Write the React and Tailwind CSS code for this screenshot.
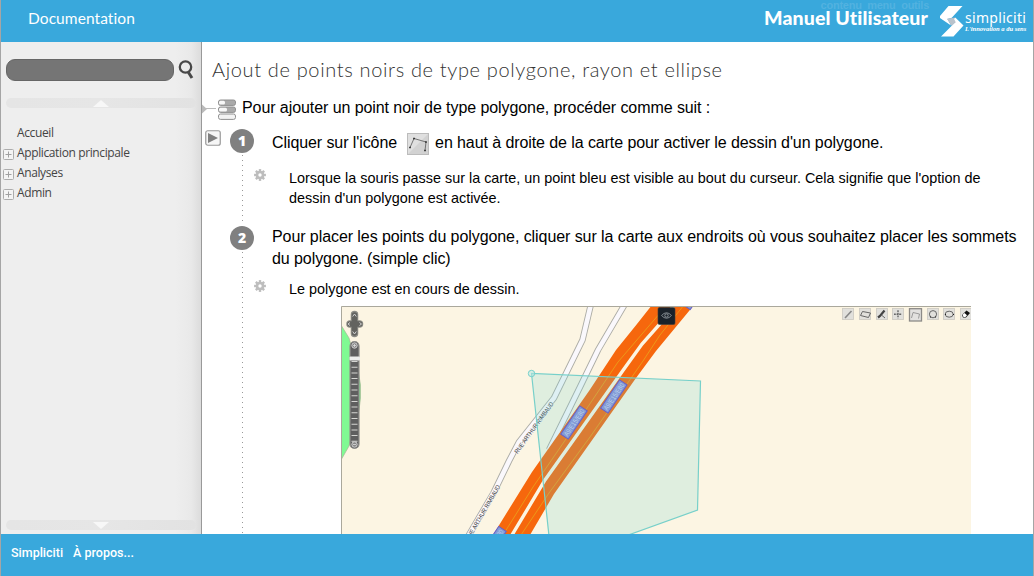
import React from "react";

const menu = [
  { label: "Accueil", expandable: false },
  { label: "Application principale", expandable: true },
  { label: "Analyses", expandable: true },
  { label: "Admin", expandable: true },
];

function Logo() {
  return (
    <svg width="24" height="31" viewBox="940 6 24 31" className="mt-1.5 shrink-0">
      <path d="M948.500 6H962.500L951.800 17.800L947.500 19L951 25.500L940 18V16Z" fill="#fff" />
      <path d="M947 18.800L955.500 17.500L958 22L951.500 25.800Z" fill="#b3bfca" />
      <path d="M951 21L955.500 17.800L963.500 25.500L953.500 36.500H941L952 25.500L956 22Z" fill="#fff" />
      <path d="M947.500 19.200L953.500 18L955.500 21.500L951.500 25Z" fill="#b9c3cc" />
    </svg>
  );
}

function Header() {
  return (
    <header className="relative flex h-[42px] shrink-0 items-start bg-[#39a8dc] text-white">
      <div className="pl-[27px] pt-[7px] font-['Lato'] text-[15.5px] font-normal leading-[22px] tracking-[0.080px]">Documentation</div>
      <div className="absolute right-[104px] top-[-2px] whitespace-pre font-['Liberation_Sans'] text-[11px] font-bold leading-[14px] tracking-[-0.250px] text-[#52b2e0]">contenu  menu  outils</div>
      <div className="relative ml-auto w-[166px] whitespace-nowrap pt-[6px] font-['Lato'] text-[19.500px] font-black leading-6 tracking-[0.120px]">Manuel Utilisateur</div>
      <div className="ml-[10px] flex w-[93px]">
        <Logo />
        <div className="ml-px pt-[9px] font-['Noto_Sans'] leading-none">
          <div className="text-[14px] leading-[18px] tracking-[0.3px]">simpliciti</div>
          <div className="-mt-px whitespace-nowrap font-['Liberation_Serif'] text-[6.500px] font-bold italic leading-[6px]">L'innovation a du sens</div>
        </div>
      </div>
    </header>
  );
}

function ScrollBand({ down }) {
  return (
    <div className="flex h-[10px] w-[190px] shrink-0 items-center justify-center rounded-full bg-gradient-to-r from-[#e5e5e5] via-[#e6e6e6] to-[#e2e2e2]">
      <svg width="16" height="7" viewBox="0 0 16 7"><path d={down ? "M0 0H16L8 7Z" : "M0 7H16L8 0Z"} fill="#f7f7f7" /></svg>
    </div>
  );
}

function Expander() {
  return (
    <svg width="11" height="11" viewBox="0 0 11 11" className="mt-[3px]">
      <rect x=".5" y=".5" width="10" height="10" rx="1" fill="#f4f4f4" stroke="#acacac" />
      <path d="M2.500 5.500H8.500M5.500 2.500V8.500" stroke="#a0a0a0" />
    </svg>
  );
}

function Sidebar() {
  return (
    <aside className="flex w-[201px] shrink-0 flex-col border-r border-[#999] bg-[linear-gradient(to_right,#eeeeee_0,#eeeeee_174px,#e9e9e9_190px,#dcdcdc_200px)] pl-[5px]">
      <div className="flex items-start pt-[17px]">
        <div className="h-[22px] w-[168px] rounded-[9px] border border-[#666] bg-[#757575]" />
        <svg width="16" height="20" viewBox="0 0 16 20" className="ml-1 mt-px" fill="none" stroke="#484848">
          <circle cx="7.500" cy="7" r="5.700" strokeWidth="2.300" />
          <path d="M10.500 12.500L14 18" strokeWidth="3" />
        </svg>
      </div>
      <div className="mt-[17px]"><ScrollBand /></div>
      <ul className="-ml-[3px] mt-[15px] flex-1 font-['Open_Sans'] text-[12px] leading-5 tracking-[-0.38px] text-[#444]">
        {menu.map((m) => (
          <li key={m.label} className="flex h-5 items-center">
            <span className="flex w-[14px]">{m.expandable && <Expander />}</span>
            <span>{m.label}</span>
          </li>
        ))}
      </ul>
      <div className="mb-1"><ScrollBand down /></div>
    </aside>
  );
}

function Gear() {
  return (
    <svg width="12" height="12" viewBox="-6 -6 12 12" className="mt-px shrink-0">
      <g fill="#bdbdbd">
        {[0, 45, 90, 135].map((a) => (
          <rect key={a} x="-1.200" y="-5.900" width="2.400" height="11.800" transform={`rotate(${a})`} />
        ))}
        <circle r="4.300" />
      </g>
      <circle r="1.700" fill="#fff" />
    </svg>
  );
}

function Step({ n, play, className, children }) {
  return (
    <section className={"flex " + className}>
      <div className="flex w-[52px] shrink-0 justify-end gap-[9px] pt-[3px]">
        {play && (
          <svg width="16" height="16" viewBox="0 0 16 16" className="mt-px">
            <rect x=".75" y=".75" width="14.500" height="14.500" rx="2" fill="#f6f6f6" stroke="#999" strokeWidth="1.200" />
            <path d="M3 3L13 8L3 13Z" fill="#808080" />
          </svg>
        )}
        <div className="flex flex-col">
          <div className="flex size-6 items-center justify-center rounded-full bg-[#808080] font-['Open_Sans'] text-[14px] font-extrabold leading-6 text-white">{n}</div>
          <div className="ml-3 w-px flex-1 bg-[repeating-linear-gradient(to_bottom,transparent_0,transparent_2px,#999_2px,#999_3px,transparent_3px,transparent_5px)]" />
        </div>
      </div>
      <div className="min-w-0 flex-1">{children}</div>
    </section>
  );
}

function Hint({ children, className }) {
  return (
    <div className={"flex gap-[23px] whitespace-nowrap text-[14.400px] leading-5 " + className}>
      <Gear />
      <div>{children}</div>
    </div>
  );
}

function PolygonIcon() {
  return (
    <svg width="22" height="22" viewBox="0 0 22 22" className="ml-[10px] mr-[6px] mt-[1px] shrink-0">
      <rect x=".5" y=".5" width="21" height="21" fill="#e0e0e0" stroke="#bcbcbc" />
      <path d="M1 21L21 1V21Z" fill="#d2d2d2" />
      <path d="M3 14.500L7 5.500L19 9L18 17.500" fill="none" stroke="#666" strokeWidth=".9" />
      <path d="M2.200 13.700h1.600v1.600H2.200zM6.200 4.700h1.600v1.600H6.200zM18.200 8.200h1.600v1.600H18.200zM17.200 16.700h1.600v1.600H17.200z" fill="#222" />
    </svg>
  );
}

function RoadTag({ x, y, a = -56 }) {
  return (
    <g transform={`translate(${x} ${y}) rotate(${a})`}>
      <rect x="-17" y="-4.500" width="34" height="9" fill="#839bd5" stroke="#6260cf" strokeWidth="1" />
      <text y="2.700" textAnchor="middle" fontSize="7" fill="#b9d0ed" fontFamily="Liberation Sans, sans-serif" textLength="31" lengthAdjust="spacingAndGlyphs">A9/E15/E80</text>
    </g>
  );
}

const toolX = [842, 859, 876, 892, 909, 927, 943, 960];

function MapView() {
  const r1 = "M591 304L582.500 340L554 398Q535 422 519 442L509 461L494 492L466 540";
  const r2 = "M625 304L598 350L580 387L549 450";
  return (
    <svg width="630" height="228" viewBox="341 306 630 228" className="ml-[87px] mt-[7px] block">
      <rect x="341" y="306" width="630" height="228" fill="#fcf5e3" />
      <path d="M341 325L349 338L358 370L360.500 385V398L359 410L349 446L341 460Z" fill="#80fa93" stroke="#a4b894" strokeWidth=".7" />
      {[r1, r2].map((d) => (
        <g key={d} fill="none">
          <path d={d} stroke="#acaca5" strokeWidth="6.400" />
          <path d={d} stroke="#faf8fc" strokeWidth="4.600" />
        </g>
      ))}
      <path d="M652 305L637 324L616 350L589 391L532 472L493 535H530L554 494L636 378L656 351L694 305Z" fill="#f6670d" />
      <path d="M674 305L659 325L642 344L624 369L545 480L512 535" fill="none" stroke="#fcf5e3" strokeWidth="3.400" />
      <path d="M667 305L642 334L618 362L577 423L533 487L503 535M684 305L660 335L643 361L590 437L549 493L521 535" fill="none" stroke="#e9a51c" strokeWidth=".8" />
      <g fontFamily="Liberation Sans, sans-serif" fontSize="6.200" fill="#333" stroke="#faf8fc" strokeWidth="1.200" paintOrder="stroke">
        <text transform="translate(517.500 454) rotate(-54)" textLength="62" lengthAdjust="spacingAndGlyphs">RUE ARTHUR RIMBAUD</text>
        <text transform="translate(469 541) rotate(-60)" textLength="63" lengthAdjust="spacingAndGlyphs">RUE ARTHUR RIMBAUD</text>
      </g>
      <RoadTag x={493} y={543} />
      <RoadTag x={696} y={293} />
      <path d="M531.500 373.500L700.500 381L697.500 510L631 534L549 538Z" fill="#70d2d4" fillOpacity=".2" />
      <path d="M549 536L531.500 373.500L700.500 381L697.500 510L627 535.500" fill="none" stroke="#77d0ca" strokeWidth="1.200" />
      <circle cx="531.500" cy="373.500" r="3.200" fill="#bae8e2" fillOpacity=".5" stroke="#74d0cb" />
      <RoadTag x={574} y={422.500} />
      <RoadTag x={613.800} y={396.500} />
      <rect x="658" y="307.500" width="17" height="17" rx="1.500" fill="#1a222a" stroke="#3c3c3c" strokeWidth=".6" />
      <path d="M661.500 315.500Q666.500 310 671.500 315.500Q666.500 321 661.500 315.500Z" fill="none" stroke="#7d858b" />
      <circle cx="666.500" cy="315.500" r="1.700" fill="none" stroke="#8d959b" />

      <path d="M354.500 314.500V333.500M350 324H359.500" stroke="#8c8c86" strokeWidth="7.500" strokeLinecap="round" />
      <path d="M354.500 315V333M350 324H359.500" stroke="#63635f" strokeWidth="5.500" strokeLinecap="round" />
      <path d="M352.700 316.500L354.500 314L356.300 316.500M352.700 331.500L354.500 334L356.300 331.500M350 322.500L348 324L350 325.500M359.500 322.500L361.500 324L359.500 325.500" fill="none" stroke="#ddd" strokeWidth=".9" />
      <rect x="350" y="341.500" width="9" height="107" rx="4.500" fill="#5f5f5f" stroke="#90908c" strokeWidth="1.200" />
      <path d="M354.500 361V442" stroke="#d5d5d2" strokeWidth="6" strokeDasharray="1 4.700" />
      <circle cx="354.500" cy="345.500" r="2.700" fill="#888" stroke="#d0d0d0" />
      <circle cx="354.500" cy="444.500" r="2.700" fill="#888" stroke="#d0d0d0" />
      <path d="M353 345.500H356M354.500 344V347M353 444.500H356" stroke="#ddd" strokeWidth=".8" />
      <rect x="349.500" y="356.500" width="10.500" height="4" rx="1" fill="#eeeeec" />

      {toolX.map((x) => (
        <rect key={x} x={x + 0.5} y="308.500" width="11" height="11" fill="#e1e0dc" stroke="#cfcdc5" strokeWidth=".9" />
      ))}
      <rect x="909.500" y="308.700" width="12" height="12.300" fill="#e2e1df" stroke="#8d8b88" strokeWidth="1.300" />
      <g fill="none" stroke="#666" strokeWidth="1">
        <path d="M845 318L851.500 311" stroke="#888" strokeWidth="1.600" />
        <path d="M862.500 311.500L870.500 313L868.500 317.500L860.500 315.500Z" />
        <path d="M878 317.500L880 316L884.500 310.500" stroke="#444" strokeWidth="2.200" />
        <path d="M882 315.500L885 318" />
        <path d="M894 314.200H902M898 310.200V318.200" strokeDasharray="1.800 .8" strokeWidth="1.400" />
        <path d="M911.500 318L913 312.500L919.500 314L918.500 318.500" stroke="#888" strokeWidth=".8" />
        <circle cx="933" cy="314.200" r="3.600" />
        <ellipse cx="949.200" cy="314.200" rx="4" ry="3" />
        <path d="M930 317h1M935 317h1M945 314.500h1M953 314.500h1" stroke="#222" />
      </g>
      <path d="M962 315L966.500 310.500L970 313L966 317.500H963Z" fill="#111" />
      <path d="M962.500 314.800L964.500 313L967 315.200L965.500 317H963.500Z" fill="#fff" />
      <path d="M341.500 534V306.500H971" fill="none" stroke="#aaa89c" />
    </svg>
  );
}

function Content() {
  return (
    <main className="flex min-w-0 flex-1 flex-col overflow-hidden bg-white text-black">
      <h1 className="h-[48px] shrink-0 whitespace-nowrap pl-[10px] pt-[14px] font-['Lato'] text-[20px] font-light leading-[26px] tracking-[0.65px] text-[#333]">
        Ajout de points noirs de type polygone, rayon et ellipse
      </h1>
      <div className="flex h-9 shrink-0 items-center">
        <svg width="34" height="22" viewBox="0 0 34 22" className="mt-[3px]">
          <path d="M0 5.500L5 10L0 14.500Z" fill="#bbb" />
          <path d="M4 9.500H14" stroke="#bbb" />
          {[1, 8, 15].map((y, i) => (
            <g key={y}>
              <rect x="16.500" y={y} width="17" height="5.400" rx="2" fill={i === 2 ? "#f3f3f3" : "#aaa"} stroke="#909090" />
              {i < 2 && <rect x="17" y={y + 0.8} width={i ? 8 : 6} height="3.800" rx="1.500" fill="#f8f8f8" />}
            </g>
          ))}
        </svg>
        <p className="whitespace-nowrap pl-[6px] text-[16px] tracking-[-0.075px]">Pour ajouter un point noir de type polygone, procéder comme suit :</p>
      </div>
      <Step n="1" play className="h-[97px] shrink-0">
        <div className="flex h-[34px] items-center whitespace-nowrap pl-[18px] text-[16px] tracking-[-0.085px]">
          <span>Cliquer sur l'icône</span>
          <PolygonIcon />
          <span>en haut à droite de la carte pour activer le dessin d'un polygone.</span>
        </div>
        <Hint className="mt-[8px]">
          Lorsque la souris passe sur la carte, un point bleu est visible au bout du curseur. Cela signifie que l'option de
          <br />
          dessin d'un polygone est activée.
        </Hint>
      </Step>
      <Step n="2" className="h-[311px] shrink-0">
        <p className="whitespace-nowrap pl-[18px] pt-[3px] text-[16px] leading-[22px] tracking-[-0.075px]">
          Pour placer les points du polygone, cliquer sur la carte aux endroits où vous souhaitez placer les sommets
          <br />
          du polygone. (simple clic)
        </p>
        <Hint className="mt-[9px]">Le polygone est en cours de dessin.</Hint>
        <MapView />
      </Step>
    </main>
  );
}

export default function App() {
  return (
    <div className="flex h-[576px] w-[1034px] flex-col overflow-hidden border-x border-[#a5a5a5] font-['Liberation_Sans',sans-serif]">
      <Header />
      <div className="flex h-[492px] shrink-0">
        <Sidebar />
        <Content />
      </div>
      <footer className="flex h-[42px] shrink-0 items-start gap-[10px] bg-[#39a8dc] pl-[10px] pt-[9px] font-['Roboto'] text-[12.500px] font-medium leading-5 text-white">
        <span>Simpliciti</span>
        <span>À propos...</span>
      </footer>
    </div>
  );
}
